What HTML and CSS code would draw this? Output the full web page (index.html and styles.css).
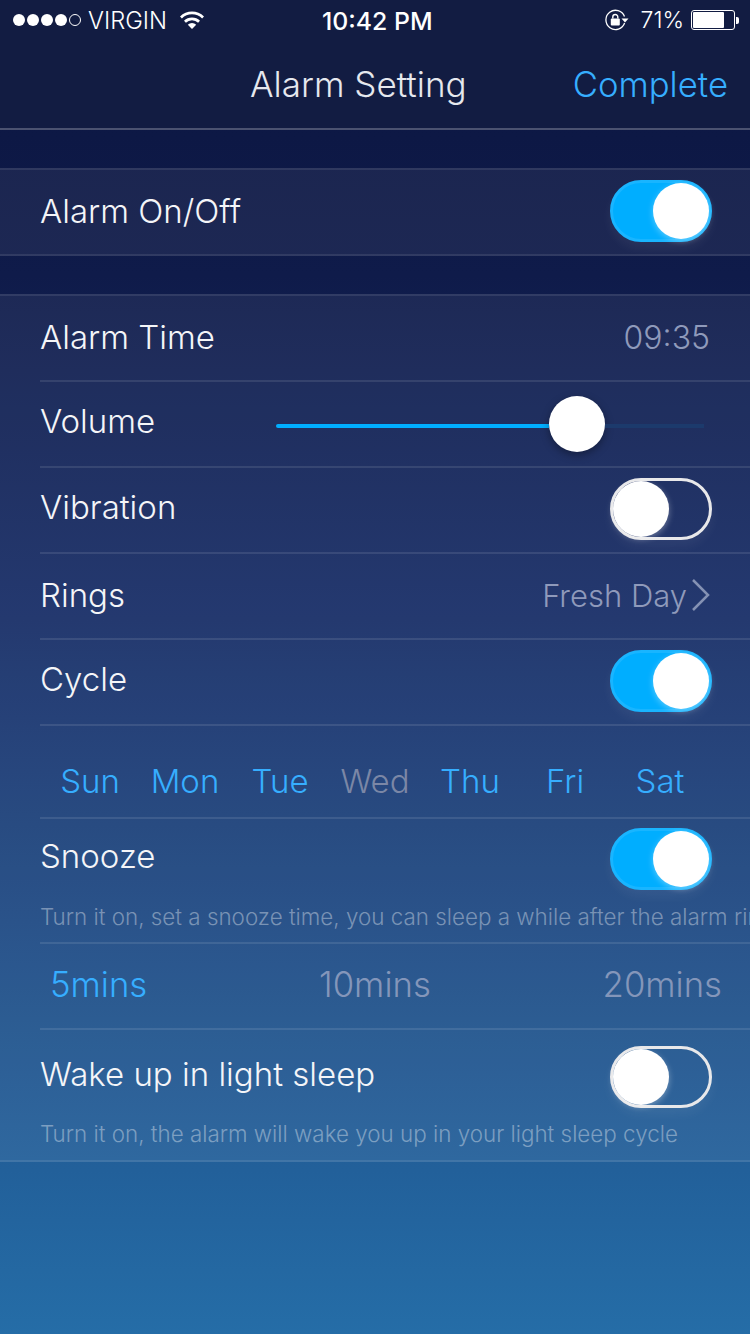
FILE: index.html
```html
<!DOCTYPE html>
<html lang="en">
<head>
  <meta charset="UTF-8">
  <title>Alarm Setting</title>
  <link rel="stylesheet" href="styles.css">
</head>
<body>

<div class="screen">
  <div class="top">
    <div class="status">
      <div class="status-left">
        <span class="dots"><i></i><i></i><i></i><i></i><i class="empty"></i></span>
        <span class="carrier">VIRGIN</span>
        <svg class="wifi" width="26" height="20" viewBox="0 0 26 20">
          <path d="M1 6.5a17 17 0 0 1 24 0l-1.9 2a14.300 14.300 0 0 0-20.200 0z" fill="#fff"/>
          <path d="M5 10.700a11.300 11.300 0 0 1 16 0l-1.900 2a8.600 8.600 0 0 0-12.200 0z" fill="#fff"/>
          <path d="M8.800 14.700a6 6 0 0 1 8.400 0L13 19z" fill="#fff"/>
        </svg>
      </div>
      <div class="clock">10:42 PM</div>
      <div class="status-right">
        <svg class="lock" width="24" height="22" viewBox="0 0 24 22">
          <path d="M19.500 7.500A9.600 9.600 0 1 0 19.600 14" fill="none" stroke="#fff" stroke-width="1.300"/>
          <path d="M16.500 9.500h7l-3.500 4z" fill="#fff"/>
          <rect x="5.800" y="9.500" width="9" height="7" rx="1" fill="#fff"/>
          <path d="M7.800 9.500V8a2.500 2.500 0 0 1 5 0v1.500" fill="none" stroke="#fff" stroke-width="1.400"/>
        </svg>
        <span class="percent">71%</span>
        <span class="battery"><span class="battery-level"></span></span>
        <span class="battery-tip"></span>
      </div>
    </div>
    <div class="nav">
      <div class="nav-title">Alarm Setting</div>
      <div class="nav-action">Complete</div>
    </div>
  </div>

  <div class="group">
    <div class="row">
      <span class="label">Alarm On/Off</span>
      <span class="toggle on"><span class="thumb"></span></span>
    </div>
  </div>

  <div class="group">
    <div class="row line">
      <span class="label">Alarm Time</span>
      <span class="value">09:35</span>
    </div>
    <div class="row line">
      <span class="label raised">Volume</span>
      <div class="slider">
        <span class="slider-fill"></span>
        <span class="slider-thumb"></span>
        <span class="slider-rest"></span>
      </div>
    </div>
    <div class="row line">
      <span class="label raised">Vibration</span>
      <span class="toggle"><span class="thumb"></span></span>
    </div>
    <div class="row line">
      <span class="label">Rings</span>
      <span class="rings">
        <span class="value">Fresh Day</span>
        <svg class="chevron" width="20" height="34" viewBox="0 0 20 34">
          <path d="M2 2l15 15L2 32" fill="none" stroke="#8592b4" stroke-width="2.500"/>
        </svg>
      </span>
    </div>
    <div class="row line">
      <span class="label raised">Cycle</span>
      <span class="toggle on"><span class="thumb"></span></span>
    </div>
    <div class="days line">
      <span class="day">Sun</span>
      <span class="day">Mon</span>
      <span class="day">Tue</span>
      <span class="day off">Wed</span>
      <span class="day">Thu</span>
      <span class="day">Fri</span>
      <span class="day">Sat</span>
    </div>
    <div class="tall snooze line">
      <div class="tall-head">
        <span class="label">Snooze</span>
        <span class="toggle on"><span class="thumb"></span></span>
      </div>
      <div class="hint">Turn it on, set a snooze time, you can sleep a while after the alarm rings</div>
    </div>
    <div class="mins line">
      <span class="min active">5mins</span>
      <span class="min">10mins</span>
      <span class="min">20mins</span>
    </div>
    <div class="tall wake">
      <div class="tall-head">
        <span class="label">Wake up in light sleep</span>
        <span class="toggle"><span class="thumb"></span></span>
      </div>
      <div class="hint">Turn it on, the alarm will wake you up in your light sleep cycle</div>
    </div>
  </div>
</div>

</body>
</html>
```

FILE: styles.css
```css
body {
  margin: 0;
  padding: 0;
  font-family: Inter, "Noto Sans", sans-serif;
  color: #fff;
  background-color: #0b1540;
}
.screen {
  width: 750px;
  height: 1334px;
  overflow: hidden;
  background: linear-gradient(180deg, #0b1540 0, #0f1b4a 275px, #172d67 620px, #22609a 1170px, #256da7 1334px);
}
.top {
  height: 128px;
  background-color: #121c42;
  border-bottom: 2px solid #4b5270;
}
.status {
  height: 40px;
  display: flex;
  align-items: center;
  justify-content: space-between;
  position: relative;
  padding: 0 11px 0 13px;
}
.status-left, .status-right {
  display: flex;
  align-items: center;
}
.dots {
  display: flex;
  gap: 2px;
}
.dots i {
  width: 12px;
  height: 12px;
  border-radius: 50%;
  background-color: #fff;
}
.dots i.empty {
  background: none;
  border: 1px solid #fff;
  width: 10px;
  height: 10px;
}
.carrier {
  font-size: 23.700px;
  font-weight: 300;
  margin-left: 7px;
}
.wifi {
  margin-left: 12px;
}
.clock {
  position: absolute;
  left: 322px;
  top: 6px;
  font-size: 24.800px;
  font-weight: 500;
}
.percent {
  font-size: 23px;
  font-weight: 300;
  margin-left: 12px;
}
.battery {
  width: 40px;
  height: 16px;
  border: 1px solid #fff;
  border-radius: 3px;
  margin-left: 7px;
  padding: 1px;
  display: block;
}
.battery-level {
  display: block;
  width: 31px;
  height: 16px;
  background-color: #fff;
  border-radius: 1px;
}
.battery-tip {
  width: 3px;
  height: 7px;
  background-color: #fff;
  margin-left: 1px;
  border-radius: 0 2px 2px 0;
}
.nav {
  height: 88px;
  display: flex;
  align-items: center;
  justify-content: space-between;
  padding: 0 22px 0 0;
}
.nav-title {
  font-size: 35px;
  font-weight: 300;
  color: #e6e8ee;
  margin-left: 250px;
}
.nav-action {
  font-size: 34.700px;
  font-weight: 300;
  color: #36aeff;
}
.group {
  margin-top: 38px;
  background-color: rgba(255, 255, 255, 0.06);
  border-top: 2px solid rgba(255, 255, 255, 0.09);
  border-bottom: 2px solid rgba(255, 255, 255, 0.09);
  padding-left: 40px;
}
.row {
  height: 84px;
  box-sizing: border-box;
  padding: 0 38px 2px 0;
  display: flex;
  align-items: center;
  justify-content: space-between;
}
.line {
  border-bottom: 2px solid rgba(255, 255, 255, 0.1);
}
.row.line {
  height: 86px;
  padding-bottom: 2px;
}
.label {
  font-size: 33px;
  font-weight: 300;
  color: #f4f5f8;
}
.label.raised {
  margin-bottom: 4px;
}
.value {
  font-size: 32px;
  font-weight: 300;
  color: #8f9abb;
  margin-right: 2px;
}
.toggle {
  width: 102px;
  height: 62px;
  box-sizing: border-box;
  border: 3px solid #e8e8ea;
  border-radius: 31px;
  display: flex;
  justify-content: flex-start;
  box-shadow: 0 6px 12px rgba(255, 255, 255, 0.06);
}
.toggle.on {
  background-color: #00aeff;
  border-color: #19b5ff;
  justify-content: flex-end;
}
.thumb {
  width: 56px;
  height: 56px;
  border-radius: 50%;
  background-color: #fff;
  box-shadow: 0 2px 6px rgba(255, 255, 255, 0.35);
}
.slider {
  width: 428px;
  margin-right: 8px;
  display: flex;
  align-items: center;
}
.slider-fill {
  width: 273px;
  height: 4px;
  margin-top: 6px;
  background-color: #00aeff;
  border-radius: 2px 0 0 2px;
}
.slider-thumb {
  width: 56px;
  height: 56px;
  border-radius: 50%;
  background-color: #fff;
  box-shadow: 0 3px 8px rgba(0, 0, 0, 0.35);
  margin-top: 2px;
}
.slider-rest {
  flex: 1;
  height: 4px;
  margin-top: 6px;
  background-color: #1c3a6c;
}
.rings {
  display: flex;
  align-items: center;
  gap: 4px;
}
.rings .value {
  font-size: 31px;
  margin-right: 0;
}
.chevron {
  margin-right: 1px;
}
.days {
  padding: 18px 0 0 2.500px;
  height: 73px;
  display: flex;
  align-items: center;
}
.day {
  width: 95px;
  text-align: center;
  font-size: 33px;
  font-weight: 300;
  color: #36aeff;
}
.day.off {
  color: #7b87a6;
}
.tall {
  padding-right: 38px;
  overflow: hidden;
  box-sizing: border-box;
}
.snooze {
  height: 125px;
  padding-top: 9px;
}
.wake {
  height: 130px;
  padding-top: 16px;
}
.tall-head {
  display: flex;
  align-items: center;
  justify-content: space-between;
}
.tall-head .label {
  margin-bottom: 6px;
}
.hint {
  font-size: 22.400px;
  font-weight: 300;
  color: rgba(255, 255, 255, 0.38);
  white-space: nowrap;
  margin-top: 13px;
}
.wake .hint {
  margin-top: 12px;
}
.mins {
  height: 80px;
  padding: 0 28px 4px 10px;
  display: flex;
  align-items: center;
  justify-content: space-between;
}
.min {
  font-size: 34.700px;
  font-weight: 300;
  color: #8496ba;
}
.min.active {
  color: #36aeff;
}
```
